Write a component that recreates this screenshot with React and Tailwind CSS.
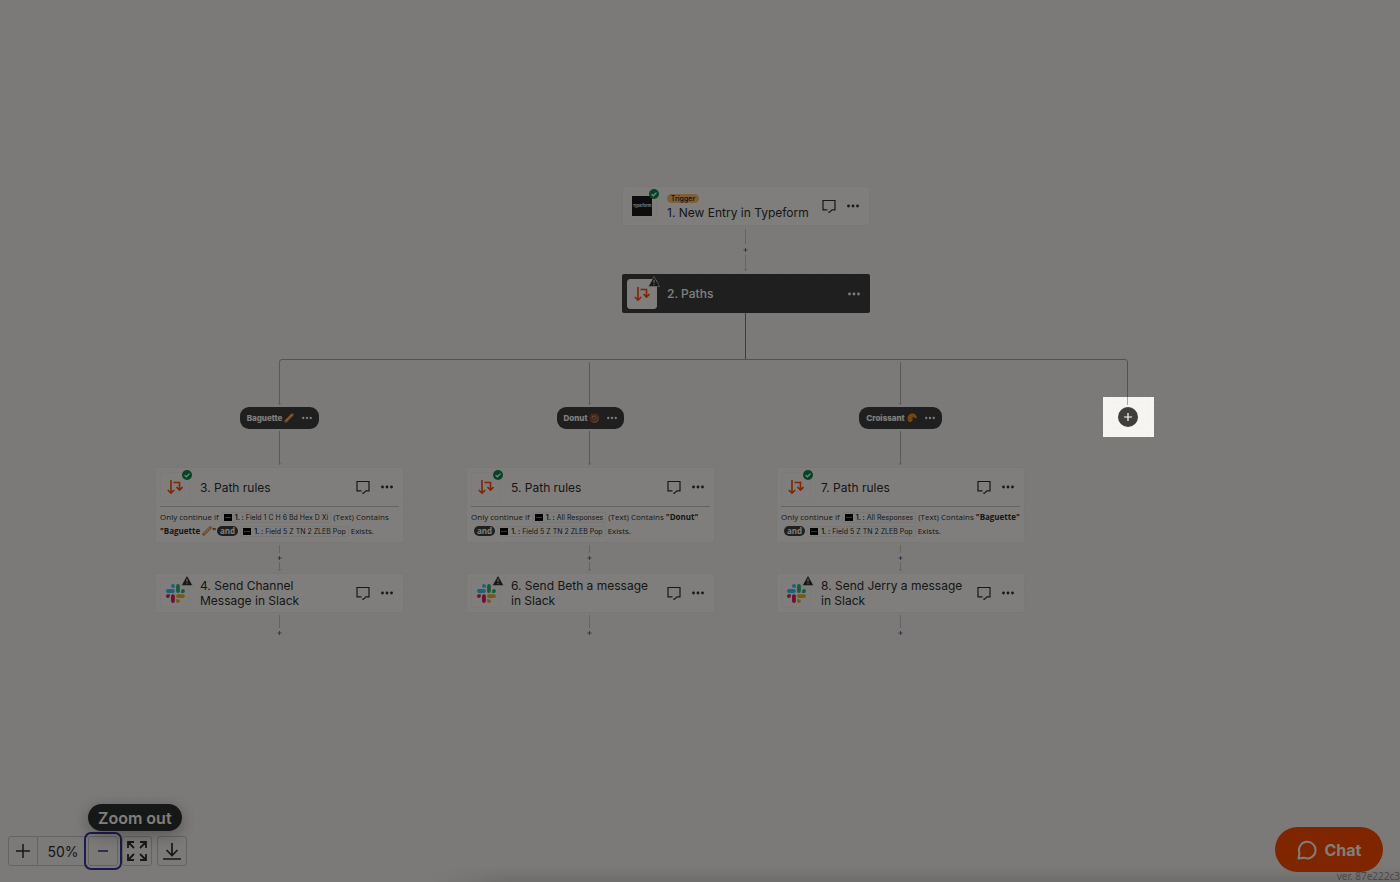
import clsx from "clsx";

const typeformTrigger = { left: 622, top: 186 };
const pathsNode = { left: 622, top: 274 };

const columns = [
    {
        left: 155,
        center: 279.5,
        name: "Baguette",
        emoji: "baguette",
        rulesTitle: "3. Path rules",
        field: "Field 1 C H 6 Bd Hex D Xi",
        value: "Baguette",
        valueEmoji: true,
        slackTitle: ["4. Send Channel", "Message in Slack"],
    },
    {
        left: 466,
        center: 589.5,
        name: "Donut",
        emoji: "donut",
        rulesTitle: "5. Path rules",
        field: "All Responses",
        value: "Donut",
        slackTitle: ["6. Send Beth a message", "in Slack"],
    },
    {
        left: 776,
        center: 900.5,
        name: "Croissant",
        emoji: "croissant",
        rulesTitle: "7. Path rules",
        field: "All Responses",
        value: "Baguette",
        slackTitle: ["8. Send Jerry a message", "in Slack"],
    },
];

function Emoji({ name }) {
    if (name === "donut") {
        return (
            <svg viewBox="0 0 20 20" className="size-[10px] shrink-0">
                <circle cx="10.5" cy="10.5" r="9" fill="#d98a45" />
                <circle cx="9.5" cy="9.5" r="8" fill="#8f4a36" />
                <circle cx="9.5" cy="9" r="4" fill="#e0b393" />
                <circle cx="9.5" cy="9.6" r="2.6" fill="#6b3a2c" />
            </svg>
        );
    }
    if (name === "croissant") {
        return (
            <svg viewBox="0 0 20 20" className="size-[10px] shrink-0">
                <path
                    d="M3 17C-1 10 2 2 10 1c6-1 10 4 9 9-1 1-3 1-4-1-1-1-3-1-4 0-1 2 1 3 0 5-1 3-5 5-8 3z"
                    fill="#f09a28"
                />
                <path d="M4 6l6 4M10 2l1 7M2 12l8 1M16 4l-3 5" stroke="#b9660f" strokeWidth="1" fill="none" />
            </svg>
        );
    }
    return (
        <svg viewBox="0 0 20 20" className="size-[10px] shrink-0">
            <path d="M3.5 16.5L16.5 3.5" stroke="#d9813a" strokeWidth="6" strokeLinecap="round" />
            <path d="M4 15.5L16 3.5" stroke="#f2b36a" strokeWidth="3" strokeLinecap="round" />
            <path d="M5 12.5l3 2M9 8.5l3 2M13 4.5l3 2" stroke="#fbe3b8" strokeWidth="1.5" />
        </svg>
    );
}

function PathsIcon() {
    return (
        <svg viewBox="0 0 16 16" className="size-4" fill="none" stroke="#ff4a00" strokeWidth="1.6">
            <path d="M4 1v13M.8 11L4 14.2 7.2 11" />
            <path d="M6.5 3.5h6v7M9.5 8l3 3 3-3" />
        </svg>
    );
}

function SlackIcon() {
    return (
        <svg viewBox="0 0 54 54" className="size-[19px]">
            <path fill="#36C5F0" d="M19.712.133a5.381 5.381 0 0 0-5.376 5.387 5.381 5.381 0 0 0 5.376 5.386h5.376V5.52A5.381 5.381 0 0 0 19.712.133m0 14.365H5.376A5.381 5.381 0 0 0 0 19.884a5.381 5.381 0 0 0 5.376 5.387h14.336a5.381 5.381 0 0 0 5.376-5.387 5.381 5.381 0 0 0-5.376-5.386" />
            <path fill="#2EB67D" d="M53.76 19.884a5.381 5.381 0 0 0-5.376-5.386 5.381 5.381 0 0 0-5.376 5.386v5.387h5.376a5.381 5.381 0 0 0 5.376-5.387m-14.336 0V5.52A5.381 5.381 0 0 0 34.048.133a5.381 5.381 0 0 0-5.376 5.387v14.364a5.381 5.381 0 0 0 5.376 5.387 5.381 5.381 0 0 0 5.376-5.387" />
            <path fill="#ECB22E" d="M34.048 54a5.381 5.381 0 0 0 5.376-5.387 5.381 5.381 0 0 0-5.376-5.386h-5.376v5.386A5.381 5.381 0 0 0 34.048 54m0-14.365h14.336a5.381 5.381 0 0 0 5.376-5.386 5.381 5.381 0 0 0-5.376-5.387H34.048a5.381 5.381 0 0 0-5.376 5.387 5.381 5.381 0 0 0 5.376 5.386" />
            <path fill="#E01E5A" d="M0 34.249a5.381 5.381 0 0 0 5.376 5.386 5.381 5.381 0 0 0 5.376-5.386v-5.387H5.376A5.381 5.381 0 0 0 0 34.249m14.336 0v14.364A5.381 5.381 0 0 0 19.712 54a5.381 5.381 0 0 0 5.376-5.387V34.249a5.381 5.381 0 0 0-5.376-5.387 5.381 5.381 0 0 0-5.376 5.387" />
        </svg>
    );
}

function TypeformIcon() {
    return (
        <span className="flex size-5 items-center justify-center bg-[#1a1a1a] text-[4px] leading-none font-semibold text-white">
            Typeform
        </span>
    );
}

function StatusBadge({ status }) {
    if (status === "ok") {
        return (
            <svg viewBox="0 0 10 10" className="absolute -top-[3px] -right-[3px] size-[10px]">
                <circle cx="5" cy="5" r="5" fill="#0f884e" />
                <path d="M2.6 5.1l1.7 1.7L7.5 3.6" fill="none" stroke="#fff" strokeWidth="1.3" />
            </svg>
        );
    }
    return (
        <svg viewBox="0 0 12 11" className="absolute -top-1 -right-1 h-[11px] w-3">
            <path d="M6 .5L11.6 10.5H.4z" fill="#2d2e2e" stroke="#fffdf9" strokeWidth=".5" />
            <path d="M6 3.8v3.4M6 8v1.2" stroke="#e8e5df" strokeWidth="1" />
        </svg>
    );
}

function Tile({ status, children, solid }) {
    return (
        <div
            className={clsx(
                "relative flex size-[30px] shrink-0 items-center justify-center rounded-[3px] border bg-[#fffdf9]",
                solid ? "border-[#fffdf9]" : "border-[#f9f7f3]"
            )}
        >
            {children}
            <StatusBadge status={status} />
        </div>
    );
}

function CommentButton() {
    return (
        <button aria-label="Add note" className="flex size-[14px] items-center justify-center">
            <svg viewBox="0 0 14 14" className="size-[14px]" fill="none" stroke="#2d2e2e" strokeWidth="1.2">
                <path d="M5.5 10.8H1V1.5h12v9.3h-3L7 13.6v-1.2" />
            </svg>
        </button>
    );
}

function MoreButton({ small, light }) {
    return (
        <button aria-label="More actions" className="flex items-center justify-center">
            <svg
                viewBox="0 0 12 4"
                className={small ? "h-[4px] w-[10px]" : "h-[4px] w-[12px]"}
                fill={light ? "#fffdf9" : "#2d2e2e"}
            >
                <circle cx="1.5" cy="2" r="1.4" />
                <circle cx="6" cy="2" r="1.4" />
                <circle cx="10.5" cy="2" r="1.4" />
            </svg>
        </button>
    );
}

function StepHeader({ status, icon, children }) {
    return (
        <div className="flex h-[38px] items-center pr-[10px] pl-1">
            <Tile status={status}>{icon}</Tile>
            <div className="ml-[10px] flex-1 text-[12px] leading-[15px]">{children}</div>
            <div className="flex items-center gap-[11px]">
                <CommentButton />
                <MoreButton />
            </div>
        </div>
    );
}

function Token({ children }) {
    return (
        <span className="mx-[2px] inline-flex h-[11px] items-center gap-[3px] rounded-xs border border-[#f4f1ec] px-[2px] font-[Inter,sans-serif] text-[7px] leading-none">
            <span className="flex h-[7px] w-2 items-center bg-black px-px">
                <span className="h-px w-full bg-neutral-500" />
            </span>
            <span>
                <b className="font-semibold">1. :</b> {children}
            </span>
        </span>
    );
}

function Rules({ column }) {
    return (
        <div className="mx-1 border-t border-[#c9c6c0] pt-[3px] font-['Open_Sans',sans-serif] text-[8px] leading-[14px] whitespace-nowrap">
            <div className="flex items-center">
                <span>Only continue if</span>
                <Token>{column.field}</Token>
                <span>
                    (Text) Contains
                    {!column.valueEmoji && <b> "{column.value}"</b>}
                </span>
            </div>
            <div className="flex items-center">
                {column.valueEmoji && (
                    <b className="flex items-center">
                        "{column.value}&nbsp;
                        <Emoji name="baguette" />"
                    </b>
                )}
                <span
                    className={clsx(
                        "flex h-[10px] items-center rounded-full bg-[#403f3e] px-[3px] font-bold text-[#fffdf9]",
                        column.valueEmoji ? "ml-px" : "ml-[3px]"
                    )}
                >
                    and
                </span>
                <Token>Field 5 Z TN 2 ZLEB Pop</Token>
                <span>Exists.</span>
            </div>
        </div>
    );
}

function PathColumn({ column }) {
    return (
        <section className="absolute top-[407px] flex w-[249px] flex-col items-center" style={{ left: column.left }}>
            <div className="flex h-[22px] items-center rounded-[9px] bg-[#403f3e] px-[7px] text-[8px] font-extrabold text-[#fffdf9]">
                <span className="mr-[2px]">{column.name}</span>
                <Emoji name={column.emoji} />
                <span className="ml-2 flex">
                    <MoreButton small light />
                </span>
            </div>
            <article className="mt-[38px] h-[76px] w-full rounded-xs border border-[#f4f1ec] bg-[#fffdf9]">
                <StepHeader status="ok" icon={<PathsIcon />}>
                    {column.rulesTitle}
                </StepHeader>
                <Rules column={column} />
            </article>
            <article className="mt-[30px] w-full rounded-xs border border-[#f4f1ec] bg-[#fffdf9]">
                <StepHeader status="warning" icon={<SlackIcon />}>
                    {column.slackTitle[0]}
                    <br />
                    {column.slackTitle[1]}
                </StepHeader>
            </article>
        </section>
    );
}

function Plus({ x, y }) {
    return <path d={`M${x - 2} ${y}h4M${x} ${y - 2}v4`} stroke="#6e6cab" strokeWidth="1" />;
}

function Connectors() {
    return (
        <svg className="absolute inset-0 size-full" fill="none" stroke="#cbc8c3">
            <path d="M745.5 229v15M745.5 255v16M744.5 269l1 2 1-2" />
            <Plus x={745.5} y={250} />
            <path d="M745.5 313v46" stroke="#7d7a76" />
            <path d="M279.5 405v-43q0-2.5 2.5-2.5h843q2.5 0 2.5 2.5v43" stroke="#a8a5a0" />
            {columns.map(({ center: x, name }) => (
                <g key={name}>
                    <path d={`M${x} 362v43M${x} 431v34`} stroke="#b5b2ad" />
                    <path d={`M${x} 545v8M${x} 562v8M${x} 615v13`} />
                    <path d={`M${x - 1} 463l1 2 1-2M${x - 1} 569l1 2 1-2M${x - 1} 403l1 2 1-2`} />
                    <Plus x={x} y={558} />
                    <Plus x={x} y={633} />
                </g>
            ))}
        </svg>
    );
}

function Toolbar() {
    const button = "flex size-[30px] items-center justify-center border border-[#c9c6c0]";
    return (
        <div className="absolute bottom-4 left-2 flex items-center text-[#2d2e2e]">
            <button aria-label="Zoom in" className={clsx(button, "rounded-l-[3px]")}>
                <svg viewBox="0 0 14 14" className="size-[14px]" stroke="currentColor" strokeWidth="1.5">
                    <path d="M7 0v14M0 7h14" />
                </svg>
            </button>
            <span className="flex h-[30px] w-[50px] items-center justify-center border-y border-[#c9c6c0] text-[14px]">
                50%
            </span>
            <div className="relative">
                <button
                    aria-label="Zoom out"
                    className={clsx(button, "rounded-[3px] outline-2 outline-offset-2 outline-[#37379c]")}
                >
                    <svg viewBox="0 0 10 2" className="h-[2px] w-[10px]">
                        <path d="M0 1h10" stroke="#2b2b80" strokeWidth="1.5" />
                    </svg>
                </button>
                <div
                    role="tooltip"
                    className="absolute bottom-[35px] left-0 flex h-[27px] items-center rounded-full bg-[#2d2e2e] px-[10px] text-[16px] font-semibold whitespace-nowrap text-[#fffdf9] shadow-[0_4px_16px_rgba(0,0,0,0.3)]"
                >
                    Zoom out
                </div>
            </div>
            <button aria-label="Fit to view" className={clsx(button, "ml-[4px] rounded-[3px]")}>
                <svg viewBox="0 0 20 20" className="size-5" fill="none" stroke="currentColor" strokeWidth="1.8">
                    <path d="M1 7V1h6M1 1l6 6M13 1h6v6M19 1l-6 6M1 13v6h6M1 19l6-6M19 13v6h-6M19 19l-6-6" />
                </svg>
            </button>
            <button aria-label="Download" className={clsx(button, "ml-[5px] rounded-[3px]")}>
                <svg viewBox="0 0 18 18" className="size-[18px]" fill="none" stroke="currentColor" strokeWidth="1.7">
                    <path d="M9 1v12M3.5 8L9 13.5 14.5 8M0 17h18" />
                </svg>
            </button>
        </div>
    );
}

export default function App() {
    return (
        <main className="relative min-h-screen overflow-hidden bg-[#f7f5f2] bg-[radial-gradient(#f4f2ef_1px,transparent_1px)] bg-size-[5px_5px] font-[Inter,sans-serif] text-[#2d2e2e]">
            <Connectors />

            <article
                className="absolute w-[248px] rounded-xs border border-[#f4f1ec] bg-[#fffdf9]"
                style={typeformTrigger}
            >
                <StepHeader status="ok" icon={<TypeformIcon />}>
                    <span className="mt-[2px] flex h-[9px] w-8 items-center justify-center rounded-full bg-[#ffbf6e] text-[7px] font-semibold">
                        Trigger
                    </span>
                    <span className="mt-[2px] block">1. New Entry in Typeform</span>
                </StepHeader>
            </article>

            <article
                className="absolute flex h-[39px] w-[248px] items-center rounded-xs bg-[#403f3e] pr-[10px] pl-[5px] text-[#fffdf9]"
                style={pathsNode}
            >
                <Tile status="warning" solid>
                    <PathsIcon />
                </Tile>
                <h2 className="ml-[10px] flex-1 text-[12px] font-medium">2. Paths</h2>
                <MoreButton light />
            </article>

            {columns.map((column) => (
                <PathColumn key={column.name} column={column} />
            ))}

            <button
                aria-label="Add path"
                className="absolute top-[407px] left-[1118px] flex size-5 items-center justify-center rounded-full bg-[#403f3e]"
            >
                <svg viewBox="0 0 8 8" className="size-2" stroke="#fffdf9" strokeWidth="1.2">
                    <path d="M4 0v8M0 4h8" />
                </svg>
            </button>

            <div className="absolute right-0 bottom-0 left-[430px] h-4 bg-linear-to-t from-black/10 to-transparent mask-[linear-gradient(to_right,transparent,black_80px)]" />

            <Toolbar />

            <button className="absolute right-[17px] bottom-[10px] flex h-[45px] w-[108px] items-center justify-center gap-2 rounded-full bg-[#ff4a00] text-[16px] font-bold text-[#fffdf9]">
                <svg viewBox="0 0 20 20" className="size-5" fill="none" stroke="currentColor" strokeWidth="2">
                    <path d="M1.5 18.5l1-5.5A8.3 8.3 0 1 1 7 17.7z" strokeLinejoin="round" />
                </svg>
                Chat
            </button>
            <span className="absolute right-0 bottom-0 font-['Noto_Sans',sans-serif] text-[10px] leading-3 text-[#95928e]">
                ver. 87e222c3
            </span>

            {/* Tour spotlight: its shadow dims everything but the add button */}
            <div className="pointer-events-none absolute top-[397px] left-[1103px] h-10 w-[51px] shadow-[0_0_0_2000px_rgba(0,0,0,0.5)]" />
        </main>
    );
}
